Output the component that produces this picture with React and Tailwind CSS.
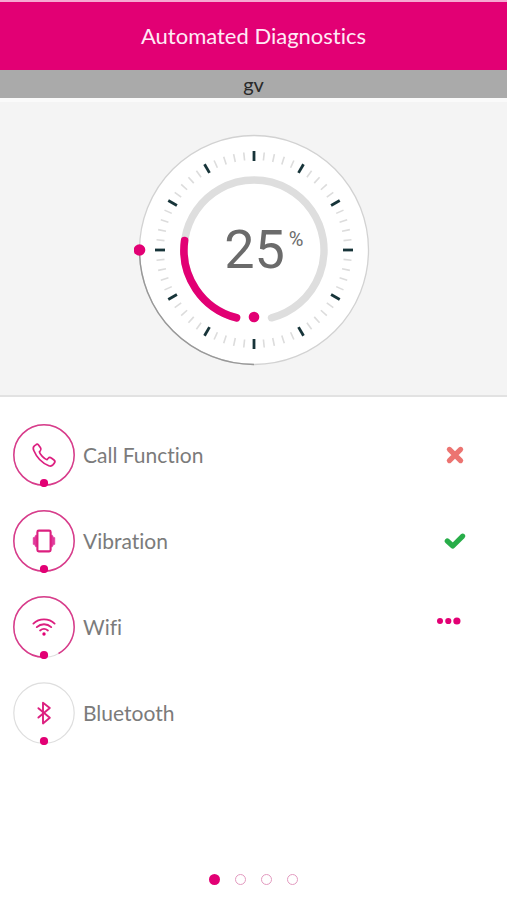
import React from "react";

const ticks = Array.from({ length: 60 }, (_, i) => i);

function Gauge({ value }) {
  return (
    <div className="relative h-[240px] w-[240px]" role="img" aria-label={`${value} percent complete`}>
      <svg viewBox="-120 -120 240 240" className="h-full w-full" fill="none">
        <circle r="114.5" fill="#fff" stroke="#d2d2d2" strokeWidth="1.3" />
        <path d="M-114.5 0A114.5 114.5 0 0 0 0 114.5" stroke="#989898" strokeWidth="1.4" />
        {ticks.map((i) => (
          <line
            key={i}
            x1="0"
            x2="0"
            y1={i % 5 === 0 ? -99 : -98}
            y2={i % 5 === 0 ? -89 : -90}
            stroke={i % 5 === 0 ? "#173439" : "#dcdcdc"}
            strokeWidth={i % 5 === 0 ? 2.8 : 1.6}
            transform={`rotate(${i * 6})`}
          />
        ))}
        <path d="M-17.5 67.8A70 70 0 1 1 17.5 67.8" stroke="#dedede" strokeWidth="7.4" strokeLinecap="round" />
        <path d="M-17.5 67.8A70 70 0 0 1 -69.4 -9.5" stroke="#e20074" strokeWidth="7.6" strokeLinecap="round" />
        <circle cx="0" cy="67" r="5.3" fill="#e20074" />
        <circle cx="-114.5" cy="0" r="5.8" fill="#e20074" />
      </svg>
      <div className="absolute inset-0 flex items-center justify-center font-['Roboto',sans-serif] text-[#6b6b6b]">
        <span className="relative pl-0.5 text-[54px] leading-none">
          {value}
          <span className="absolute left-full top-1.5 pl-1 text-[20px] leading-none">%</span>
        </span>
      </div>
    </div>
  );
}

function PhoneIcon() {
  return (
    <path
      d="M-8.2-10.2-9.6-9.1C-11-8-11-6.3-10.2-4.5-7.6 1.8-2 8 4.8 10.7 6.6 11.4 8 10.9 9.1 9.6L10.3 8.1C11.2 7 11.1 5.9 10 5L7.3 3C6.2 2.1 5.1 2.2 4.2 3.3L3 4.7C.2 4-4.2-.8-4.6-3.2L-3.6-4.3C-2.8-5.1-2.8-6.1-3.5-7.2L-5.3-9.8C-6.1-11-7.2-11.1-8.2-10.2Z"
      strokeWidth="1.7"
    />
  );
}

function VibrationIcon() {
  return (
    <g>
      <path d="M-7-5.8H-8.4L-9.6-3.4H-10.8V3.4H-9.6L-8.4 5.8H-7ZM7-5.8H8.4L9.6-3.4H10.8V3.4H9.6L8.4 5.8H7Z" fill="#e0389a" stroke="#e0389a" strokeWidth=".6" />
      <rect x="-6.6" y="-10.4" width="13.2" height="20.8" rx="1.4" fill="#fff" strokeWidth="2.1" />
    </g>
  );
}

function WifiIcon() {
  return (
    <g strokeWidth="1.9">
      <path d="M-10.6-3.4C-4.8-9 4.8-9 10.6-3.4M-7.2 .1C-3.1-3.7 3.1-3.7 7.2 .1M-3.9 3.5C-1.5 1.5 1.5 1.5 3.9 3.5" />
      <circle cy="7" r="1.7" fill="#e20074" stroke="none" />
    </g>
  );
}

function BluetoothIcon() {
  return <path d="M-5.6-4.8 5.8 4.8-1 10.4V-10.2L5.8-5-5.6 4.6" strokeWidth="1.9" />;
}

function Status({ type }) {
  if (type === "failed")
    return (
      <svg viewBox="0 0 24 24" className="h-6 w-6" fill="none" role="img" aria-label="Failed">
        <path d="m6.4 6.4 11.2 11.2M17.6 6.4 6.4 17.6" stroke="#ec7471" strokeWidth="5.2" strokeLinecap="round" />
      </svg>
    );
  if (type === "passed")
    return (
      <svg viewBox="0 0 24 24" className="h-6 w-6" fill="none" role="img" aria-label="Passed">
        <path d="m4.3 12 5.5 5L19.7 7.2" stroke="#28ad49" strokeWidth="5.2" strokeLinecap="round" strokeLinejoin="round" />
      </svg>
    );
  if (type === "running")
    return (
      <svg viewBox="0 0 24 24" className="mb-3 mr-1.5 h-6 w-6" fill="#e20074" role="img" aria-label="In progress">
        <circle cx="3" cy="12" r="3" />
        <circle cx="11.3" cy="12" r="3.1" />
        <circle cx="19.9" cy="12" r="3.6" />
      </svg>
    );
  return null;
}

const tests = [
  { name: "Call Function", Icon: PhoneIcon, progress: 100, status: "failed" },
  { name: "Vibration", Icon: VibrationIcon, progress: 100, status: "passed" },
  { name: "Wifi", Icon: WifiIcon, progress: 92, status: "running" },
  { name: "Bluetooth", Icon: BluetoothIcon, progress: 0, status: "pending" },
];

function TestRow({ name, Icon, progress, status }) {
  return (
    <li className="flex h-[86px] items-center gap-[7px] pl-3 pr-10">
      <svg viewBox="-32 -32 64 64" className="h-16 w-16 shrink-0" fill="none" aria-hidden="true">
        <circle r="30.2" stroke="#dedede" strokeWidth="1.2" />
        {progress > 0 && (
          <circle
            r="30.2"
            stroke="#d93b8b"
            strokeWidth="1.5"
            pathLength="100"
            strokeDasharray={`${progress} 100`}
            transform="rotate(90)"
          />
        )}
        <g stroke="#dc1f7f" strokeLinejoin="round" strokeLinecap="round">
          <Icon />
        </g>
        <circle cy="28" r="4.1" fill="#e20074" />
      </svg>
      <span className="grow text-[21px] leading-7 text-[#7b7b7b]">{name}</span>
      <Status type={status} />
    </li>
  );
}

export default function App() {
  return (
    <div className="flex min-h-screen flex-col bg-white font-['Lato',sans-serif] [font-variant-ligatures:none]">
      <header className="flex h-[70px] items-center justify-center border-t-2 border-[#f6a9d2] bg-[#e20074]">
        <h1 className="text-[22px] leading-7 text-[#ffeaf6]">Automated Diagnostics</h1>
      </header>
      <p className="h-7 bg-[#aaaaaa] text-center text-xl leading-7 text-[#292929]">gv</p>
      <section className="flex justify-center border-b-2 border-t-4 border-b-[#e2e2e2] border-t-[#fafafa] bg-[#f4f4f4] pb-[25px] pt-7">
        <Gauge value={25} />
      </section>
      <main className="grow pt-[15px]">
        <ul>
          {tests.map((test) => (
            <TestRow key={test.name} {...test} />
          ))}
        </ul>
      </main>
      <nav aria-label="Diagnostics pages" className="flex justify-center gap-[15px] pb-[15px]">
        {[1, 2, 3, 4].map((page) => (
          <button
            key={page}
            type="button"
            aria-label={`Page ${page}`}
            className={
              page === 1
                ? "h-[11px] w-[11px] rounded-full bg-[#e20074]"
                : "h-[11px] w-[11px] rounded-full border border-[#e39abf] bg-white"
            }
          />
        ))}
      </nav>
    </div>
  );
}
